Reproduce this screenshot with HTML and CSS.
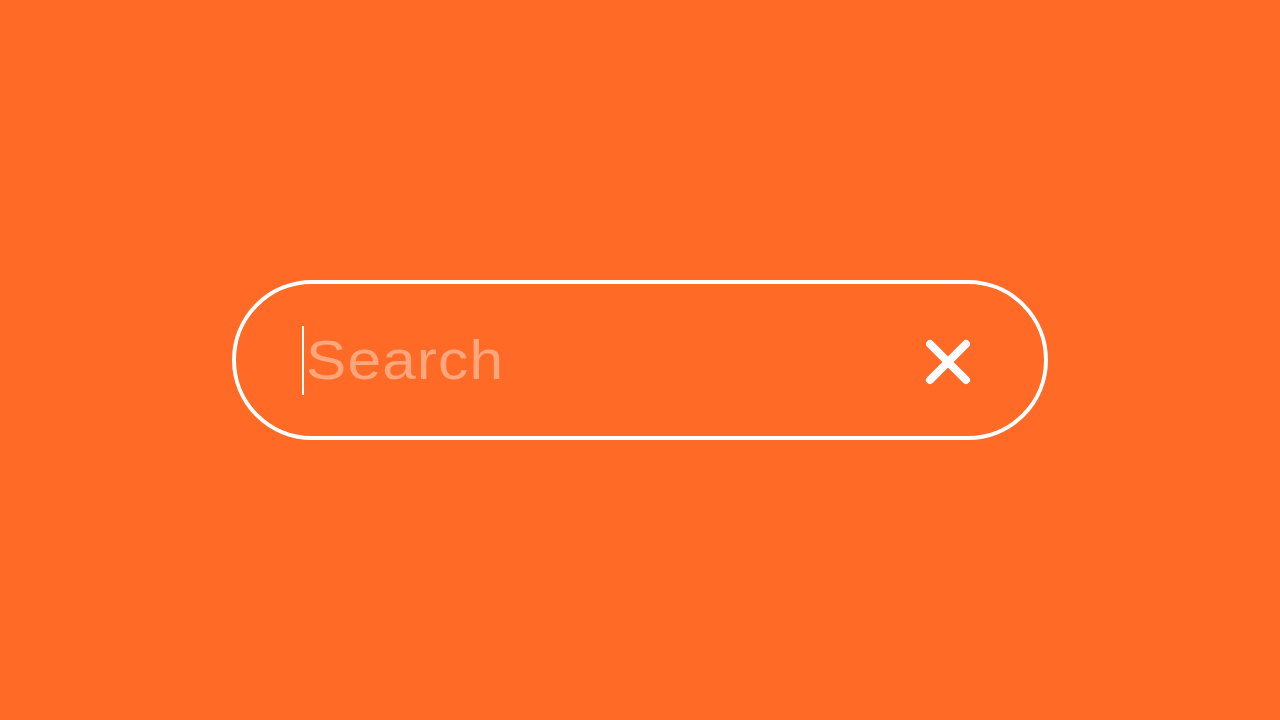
FILE: index.html
```html
<!DOCTYPE html>
<html lang="en">
<head>
<meta charset="utf-8">
<title>Search</title>
<link rel="stylesheet" href="styles.css">
</head>
<body>
<div class="search">
  <div class="field">
    <span class="caret"></span>
    <span class="placeholder">Search</span>
  </div>
  <button class="clear" aria-label="Clear">
    <svg width="48" height="48" viewBox="0 0 48 48">
      <path d="M6 6 L42 42 M42 6 L6 42" stroke="#fff" stroke-width="8" stroke-linecap="round" fill="none"/>
    </svg>
  </button>
</div>
</body>
</html>
```
FILE: styles.css
```css
html, body {
  margin: 0;
  height: 100%;
}
body {
  background: #ff6a27;
  display: flex;
  align-items: center;
  justify-content: center;
  font-family: "Liberation Sans", Arial, sans-serif;
}
.search {
  box-sizing: border-box;
  width: 816px;
  height: 160px;
  border: 4px solid #fff;
  border-radius: 80px;
  display: flex;
  align-items: center;
  padding: 0 72px 0 66px;
}
.field {
  flex: 1;
  display: flex;
  align-items: center;
  height: 70px;
}
.caret {
  width: 1.5px;
  height: 69px;
  background: #fff;
  margin-right: 2px;
}
.placeholder {
  color: #ffa67d;
  font-size: 56px;
  letter-spacing: 1px;
  line-height: 1;
  padding-bottom: 1px;
  transform: scaleX(1.08);
  transform-origin: left center;
}
.clear {
  background: none;
  border: 0;
  padding: 0;
  width: 48px;
  height: 48px;
  display: block;
  margin-top: 3px;
}
.clear svg {
  display: block;
}
```
